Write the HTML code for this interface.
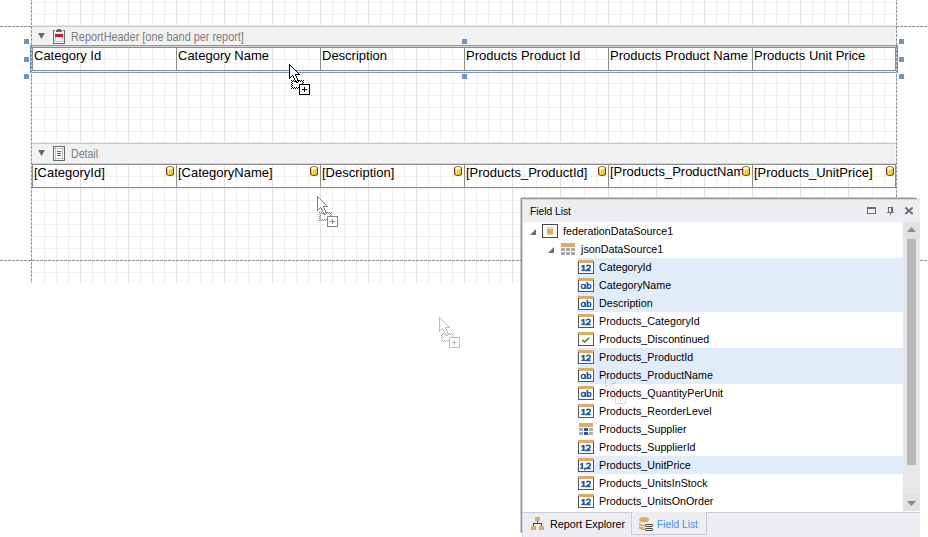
<!DOCTYPE html>
<html><head><meta charset="utf-8"><style>
html,body{margin:0;padding:0;width:928px;height:537px;overflow:hidden;background:#fff;position:relative}
.t{position:absolute;white-space:pre;font-family:"Liberation Sans",sans-serif}
</style></head><body>
<svg width="928" height="537" viewBox="0 0 928 537" style="position:absolute;left:0;top:0" shape-rendering="crispEdges"><rect x="44" y="0" width="1" height="283" fill="#efefef" /><rect x="56" y="0" width="1" height="283" fill="#efefef" /><rect x="68" y="0" width="1" height="283" fill="#efefef" /><rect x="80" y="0" width="1" height="283" fill="#e1e1e1" /><rect x="92" y="0" width="1" height="283" fill="#efefef" /><rect x="104" y="0" width="1" height="283" fill="#efefef" /><rect x="116" y="0" width="1" height="283" fill="#efefef" /><rect x="128" y="0" width="1" height="283" fill="#e1e1e1" /><rect x="140" y="0" width="1" height="283" fill="#efefef" /><rect x="152" y="0" width="1" height="283" fill="#efefef" /><rect x="164" y="0" width="1" height="283" fill="#efefef" /><rect x="176" y="0" width="1" height="283" fill="#e1e1e1" /><rect x="188" y="0" width="1" height="283" fill="#efefef" /><rect x="200" y="0" width="1" height="283" fill="#efefef" /><rect x="212" y="0" width="1" height="283" fill="#efefef" /><rect x="224" y="0" width="1" height="283" fill="#e1e1e1" /><rect x="236" y="0" width="1" height="283" fill="#efefef" /><rect x="248" y="0" width="1" height="283" fill="#efefef" /><rect x="260" y="0" width="1" height="283" fill="#efefef" /><rect x="272" y="0" width="1" height="283" fill="#e1e1e1" /><rect x="284" y="0" width="1" height="283" fill="#efefef" /><rect x="296" y="0" width="1" height="283" fill="#efefef" /><rect x="308" y="0" width="1" height="283" fill="#efefef" /><rect x="320" y="0" width="1" height="283" fill="#e1e1e1" /><rect x="332" y="0" width="1" height="283" fill="#efefef" /><rect x="344" y="0" width="1" height="283" fill="#efefef" /><rect x="356" y="0" width="1" height="283" fill="#efefef" /><rect x="368" y="0" width="1" height="283" fill="#e1e1e1" /><rect x="380" y="0" width="1" height="283" fill="#efefef" /><rect x="392" y="0" width="1" height="283" fill="#efefef" /><rect x="404" y="0" width="1" height="283" fill="#efefef" /><rect x="416" y="0" width="1" height="283" fill="#e1e1e1" /><rect x="428" y="0" width="1" height="283" fill="#efefef" /><rect x="440" y="0" width="1" height="283" fill="#efefef" /><rect x="452" y="0" width="1" height="283" fill="#efefef" /><rect x="464" y="0" width="1" height="283" fill="#e1e1e1" /><rect x="476" y="0" width="1" height="283" fill="#efefef" /><rect x="488" y="0" width="1" height="283" fill="#efefef" /><rect x="500" y="0" width="1" height="283" fill="#efefef" /><rect x="512" y="0" width="1" height="283" fill="#e1e1e1" /><rect x="524" y="0" width="1" height="283" fill="#efefef" /><rect x="536" y="0" width="1" height="283" fill="#efefef" /><rect x="548" y="0" width="1" height="283" fill="#efefef" /><rect x="560" y="0" width="1" height="283" fill="#e1e1e1" /><rect x="572" y="0" width="1" height="283" fill="#efefef" /><rect x="584" y="0" width="1" height="283" fill="#efefef" /><rect x="596" y="0" width="1" height="283" fill="#efefef" /><rect x="608" y="0" width="1" height="283" fill="#e1e1e1" /><rect x="620" y="0" width="1" height="283" fill="#efefef" /><rect x="632" y="0" width="1" height="283" fill="#efefef" /><rect x="644" y="0" width="1" height="283" fill="#efefef" /><rect x="656" y="0" width="1" height="283" fill="#e1e1e1" /><rect x="668" y="0" width="1" height="283" fill="#efefef" /><rect x="680" y="0" width="1" height="283" fill="#efefef" /><rect x="692" y="0" width="1" height="283" fill="#efefef" /><rect x="704" y="0" width="1" height="283" fill="#e1e1e1" /><rect x="716" y="0" width="1" height="283" fill="#efefef" /><rect x="728" y="0" width="1" height="283" fill="#efefef" /><rect x="740" y="0" width="1" height="283" fill="#efefef" /><rect x="752" y="0" width="1" height="283" fill="#e1e1e1" /><rect x="764" y="0" width="1" height="283" fill="#efefef" /><rect x="776" y="0" width="1" height="283" fill="#efefef" /><rect x="788" y="0" width="1" height="283" fill="#efefef" /><rect x="800" y="0" width="1" height="283" fill="#e1e1e1" /><rect x="812" y="0" width="1" height="283" fill="#efefef" /><rect x="824" y="0" width="1" height="283" fill="#efefef" /><rect x="836" y="0" width="1" height="283" fill="#efefef" /><rect x="848" y="0" width="1" height="283" fill="#e1e1e1" /><rect x="860" y="0" width="1" height="283" fill="#efefef" /><rect x="872" y="0" width="1" height="283" fill="#efefef" /><rect x="884" y="0" width="1" height="283" fill="#efefef" /><rect x="32" y="2" width="864" height="1" fill="#efefef" /><rect x="32" y="14" width="864" height="1" fill="#efefef" /><rect x="32" y="59" width="864" height="1" fill="#efefef" /><rect x="32" y="71" width="864" height="1" fill="#efefef" /><rect x="32" y="83" width="864" height="1" fill="#efefef" /><rect x="32" y="95" width="864" height="1" fill="#efefef" /><rect x="32" y="107" width="864" height="1" fill="#efefef" /><rect x="32" y="119" width="864" height="1" fill="#efefef" /><rect x="32" y="131" width="864" height="1" fill="#efefef" /><rect x="32" y="176" width="864" height="1" fill="#efefef" /><rect x="32" y="188" width="864" height="1" fill="#efefef" /><rect x="32" y="200" width="864" height="1" fill="#efefef" /><rect x="32" y="212" width="864" height="1" fill="#efefef" /><rect x="32" y="224" width="864" height="1" fill="#efefef" /><rect x="32" y="236" width="864" height="1" fill="#efefef" /><rect x="32" y="248" width="864" height="1" fill="#efefef" /><rect x="32" y="272" width="864" height="1" fill="#efefef" /><rect x="80" y="2" width="1" height="1" fill="#e1e1e1" /><rect x="80" y="14" width="1" height="1" fill="#e1e1e1" /><rect x="80" y="59" width="1" height="1" fill="#e1e1e1" /><rect x="80" y="71" width="1" height="1" fill="#e1e1e1" /><rect x="80" y="83" width="1" height="1" fill="#e1e1e1" /><rect x="80" y="95" width="1" height="1" fill="#e1e1e1" /><rect x="80" y="107" width="1" height="1" fill="#e1e1e1" /><rect x="80" y="119" width="1" height="1" fill="#e1e1e1" /><rect x="80" y="131" width="1" height="1" fill="#e1e1e1" /><rect x="80" y="176" width="1" height="1" fill="#e1e1e1" /><rect x="80" y="188" width="1" height="1" fill="#e1e1e1" /><rect x="80" y="200" width="1" height="1" fill="#e1e1e1" /><rect x="80" y="212" width="1" height="1" fill="#e1e1e1" /><rect x="80" y="224" width="1" height="1" fill="#e1e1e1" /><rect x="80" y="236" width="1" height="1" fill="#e1e1e1" /><rect x="80" y="248" width="1" height="1" fill="#e1e1e1" /><rect x="80" y="272" width="1" height="1" fill="#e1e1e1" /><rect x="128" y="2" width="1" height="1" fill="#e1e1e1" /><rect x="128" y="14" width="1" height="1" fill="#e1e1e1" /><rect x="128" y="59" width="1" height="1" fill="#e1e1e1" /><rect x="128" y="71" width="1" height="1" fill="#e1e1e1" /><rect x="128" y="83" width="1" height="1" fill="#e1e1e1" /><rect x="128" y="95" width="1" height="1" fill="#e1e1e1" /><rect x="128" y="107" width="1" height="1" fill="#e1e1e1" /><rect x="128" y="119" width="1" height="1" fill="#e1e1e1" /><rect x="128" y="131" width="1" height="1" fill="#e1e1e1" /><rect x="128" y="176" width="1" height="1" fill="#e1e1e1" /><rect x="128" y="188" width="1" height="1" fill="#e1e1e1" /><rect x="128" y="200" width="1" height="1" fill="#e1e1e1" /><rect x="128" y="212" width="1" height="1" fill="#e1e1e1" /><rect x="128" y="224" width="1" height="1" fill="#e1e1e1" /><rect x="128" y="236" width="1" height="1" fill="#e1e1e1" /><rect x="128" y="248" width="1" height="1" fill="#e1e1e1" /><rect x="128" y="272" width="1" height="1" fill="#e1e1e1" /><rect x="176" y="2" width="1" height="1" fill="#e1e1e1" /><rect x="176" y="14" width="1" height="1" fill="#e1e1e1" /><rect x="176" y="59" width="1" height="1" fill="#e1e1e1" /><rect x="176" y="71" width="1" height="1" fill="#e1e1e1" /><rect x="176" y="83" width="1" height="1" fill="#e1e1e1" /><rect x="176" y="95" width="1" height="1" fill="#e1e1e1" /><rect x="176" y="107" width="1" height="1" fill="#e1e1e1" /><rect x="176" y="119" width="1" height="1" fill="#e1e1e1" /><rect x="176" y="131" width="1" height="1" fill="#e1e1e1" /><rect x="176" y="176" width="1" height="1" fill="#e1e1e1" /><rect x="176" y="188" width="1" height="1" fill="#e1e1e1" /><rect x="176" y="200" width="1" height="1" fill="#e1e1e1" /><rect x="176" y="212" width="1" height="1" fill="#e1e1e1" /><rect x="176" y="224" width="1" height="1" fill="#e1e1e1" /><rect x="176" y="236" width="1" height="1" fill="#e1e1e1" /><rect x="176" y="248" width="1" height="1" fill="#e1e1e1" /><rect x="176" y="272" width="1" height="1" fill="#e1e1e1" /><rect x="224" y="2" width="1" height="1" fill="#e1e1e1" /><rect x="224" y="14" width="1" height="1" fill="#e1e1e1" /><rect x="224" y="59" width="1" height="1" fill="#e1e1e1" /><rect x="224" y="71" width="1" height="1" fill="#e1e1e1" /><rect x="224" y="83" width="1" height="1" fill="#e1e1e1" /><rect x="224" y="95" width="1" height="1" fill="#e1e1e1" /><rect x="224" y="107" width="1" height="1" fill="#e1e1e1" /><rect x="224" y="119" width="1" height="1" fill="#e1e1e1" /><rect x="224" y="131" width="1" height="1" fill="#e1e1e1" /><rect x="224" y="176" width="1" height="1" fill="#e1e1e1" /><rect x="224" y="188" width="1" height="1" fill="#e1e1e1" /><rect x="224" y="200" width="1" height="1" fill="#e1e1e1" /><rect x="224" y="212" width="1" height="1" fill="#e1e1e1" /><rect x="224" y="224" width="1" height="1" fill="#e1e1e1" /><rect x="224" y="236" width="1" height="1" fill="#e1e1e1" /><rect x="224" y="248" width="1" height="1" fill="#e1e1e1" /><rect x="224" y="272" width="1" height="1" fill="#e1e1e1" /><rect x="272" y="2" width="1" height="1" fill="#e1e1e1" /><rect x="272" y="14" width="1" height="1" fill="#e1e1e1" /><rect x="272" y="59" width="1" height="1" fill="#e1e1e1" /><rect x="272" y="71" width="1" height="1" fill="#e1e1e1" /><rect x="272" y="83" width="1" height="1" fill="#e1e1e1" /><rect x="272" y="95" width="1" height="1" fill="#e1e1e1" /><rect x="272" y="107" width="1" height="1" fill="#e1e1e1" /><rect x="272" y="119" width="1" height="1" fill="#e1e1e1" /><rect x="272" y="131" width="1" height="1" fill="#e1e1e1" /><rect x="272" y="176" width="1" height="1" fill="#e1e1e1" /><rect x="272" y="188" width="1" height="1" fill="#e1e1e1" /><rect x="272" y="200" width="1" height="1" fill="#e1e1e1" /><rect x="272" y="212" width="1" height="1" fill="#e1e1e1" /><rect x="272" y="224" width="1" height="1" fill="#e1e1e1" /><rect x="272" y="236" width="1" height="1" fill="#e1e1e1" /><rect x="272" y="248" width="1" height="1" fill="#e1e1e1" /><rect x="272" y="272" width="1" height="1" fill="#e1e1e1" /><rect x="320" y="2" width="1" height="1" fill="#e1e1e1" /><rect x="320" y="14" width="1" height="1" fill="#e1e1e1" /><rect x="320" y="59" width="1" height="1" fill="#e1e1e1" /><rect x="320" y="71" width="1" height="1" fill="#e1e1e1" /><rect x="320" y="83" width="1" height="1" fill="#e1e1e1" /><rect x="320" y="95" width="1" height="1" fill="#e1e1e1" /><rect x="320" y="107" width="1" height="1" fill="#e1e1e1" /><rect x="320" y="119" width="1" height="1" fill="#e1e1e1" /><rect x="320" y="131" width="1" height="1" fill="#e1e1e1" /><rect x="320" y="176" width="1" height="1" fill="#e1e1e1" /><rect x="320" y="188" width="1" height="1" fill="#e1e1e1" /><rect x="320" y="200" width="1" height="1" fill="#e1e1e1" /><rect x="320" y="212" width="1" height="1" fill="#e1e1e1" /><rect x="320" y="224" width="1" height="1" fill="#e1e1e1" /><rect x="320" y="236" width="1" height="1" fill="#e1e1e1" /><rect x="320" y="248" width="1" height="1" fill="#e1e1e1" /><rect x="320" y="272" width="1" height="1" fill="#e1e1e1" /><rect x="368" y="2" width="1" height="1" fill="#e1e1e1" /><rect x="368" y="14" width="1" height="1" fill="#e1e1e1" /><rect x="368" y="59" width="1" height="1" fill="#e1e1e1" /><rect x="368" y="71" width="1" height="1" fill="#e1e1e1" /><rect x="368" y="83" width="1" height="1" fill="#e1e1e1" /><rect x="368" y="95" width="1" height="1" fill="#e1e1e1" /><rect x="368" y="107" width="1" height="1" fill="#e1e1e1" /><rect x="368" y="119" width="1" height="1" fill="#e1e1e1" /><rect x="368" y="131" width="1" height="1" fill="#e1e1e1" /><rect x="368" y="176" width="1" height="1" fill="#e1e1e1" /><rect x="368" y="188" width="1" height="1" fill="#e1e1e1" /><rect x="368" y="200" width="1" height="1" fill="#e1e1e1" /><rect x="368" y="212" width="1" height="1" fill="#e1e1e1" /><rect x="368" y="224" width="1" height="1" fill="#e1e1e1" /><rect x="368" y="236" width="1" height="1" fill="#e1e1e1" /><rect x="368" y="248" width="1" height="1" fill="#e1e1e1" /><rect x="368" y="272" width="1" height="1" fill="#e1e1e1" /><rect x="416" y="2" width="1" height="1" fill="#e1e1e1" /><rect x="416" y="14" width="1" height="1" fill="#e1e1e1" /><rect x="416" y="59" width="1" height="1" fill="#e1e1e1" /><rect x="416" y="71" width="1" height="1" fill="#e1e1e1" /><rect x="416" y="83" width="1" height="1" fill="#e1e1e1" /><rect x="416" y="95" width="1" height="1" fill="#e1e1e1" /><rect x="416" y="107" width="1" height="1" fill="#e1e1e1" /><rect x="416" y="119" width="1" height="1" fill="#e1e1e1" /><rect x="416" y="131" width="1" height="1" fill="#e1e1e1" /><rect x="416" y="176" width="1" height="1" fill="#e1e1e1" /><rect x="416" y="188" width="1" height="1" fill="#e1e1e1" /><rect x="416" y="200" width="1" height="1" fill="#e1e1e1" /><rect x="416" y="212" width="1" height="1" fill="#e1e1e1" /><rect x="416" y="224" width="1" height="1" fill="#e1e1e1" /><rect x="416" y="236" width="1" height="1" fill="#e1e1e1" /><rect x="416" y="248" width="1" height="1" fill="#e1e1e1" /><rect x="416" y="272" width="1" height="1" fill="#e1e1e1" /><rect x="464" y="2" width="1" height="1" fill="#e1e1e1" /><rect x="464" y="14" width="1" height="1" fill="#e1e1e1" /><rect x="464" y="59" width="1" height="1" fill="#e1e1e1" /><rect x="464" y="71" width="1" height="1" fill="#e1e1e1" /><rect x="464" y="83" width="1" height="1" fill="#e1e1e1" /><rect x="464" y="95" width="1" height="1" fill="#e1e1e1" /><rect x="464" y="107" width="1" height="1" fill="#e1e1e1" /><rect x="464" y="119" width="1" height="1" fill="#e1e1e1" /><rect x="464" y="131" width="1" height="1" fill="#e1e1e1" /><rect x="464" y="176" width="1" height="1" fill="#e1e1e1" /><rect x="464" y="188" width="1" height="1" fill="#e1e1e1" /><rect x="464" y="200" width="1" height="1" fill="#e1e1e1" /><rect x="464" y="212" width="1" height="1" fill="#e1e1e1" /><rect x="464" y="224" width="1" height="1" fill="#e1e1e1" /><rect x="464" y="236" width="1" height="1" fill="#e1e1e1" /><rect x="464" y="248" width="1" height="1" fill="#e1e1e1" /><rect x="464" y="272" width="1" height="1" fill="#e1e1e1" /><rect x="512" y="2" width="1" height="1" fill="#e1e1e1" /><rect x="512" y="14" width="1" height="1" fill="#e1e1e1" /><rect x="512" y="59" width="1" height="1" fill="#e1e1e1" /><rect x="512" y="71" width="1" height="1" fill="#e1e1e1" /><rect x="512" y="83" width="1" height="1" fill="#e1e1e1" /><rect x="512" y="95" width="1" height="1" fill="#e1e1e1" /><rect x="512" y="107" width="1" height="1" fill="#e1e1e1" /><rect x="512" y="119" width="1" height="1" fill="#e1e1e1" /><rect x="512" y="131" width="1" height="1" fill="#e1e1e1" /><rect x="512" y="176" width="1" height="1" fill="#e1e1e1" /><rect x="512" y="188" width="1" height="1" fill="#e1e1e1" /><rect x="512" y="200" width="1" height="1" fill="#e1e1e1" /><rect x="512" y="212" width="1" height="1" fill="#e1e1e1" /><rect x="512" y="224" width="1" height="1" fill="#e1e1e1" /><rect x="512" y="236" width="1" height="1" fill="#e1e1e1" /><rect x="512" y="248" width="1" height="1" fill="#e1e1e1" /><rect x="512" y="272" width="1" height="1" fill="#e1e1e1" /><rect x="560" y="2" width="1" height="1" fill="#e1e1e1" /><rect x="560" y="14" width="1" height="1" fill="#e1e1e1" /><rect x="560" y="59" width="1" height="1" fill="#e1e1e1" /><rect x="560" y="71" width="1" height="1" fill="#e1e1e1" /><rect x="560" y="83" width="1" height="1" fill="#e1e1e1" /><rect x="560" y="95" width="1" height="1" fill="#e1e1e1" /><rect x="560" y="107" width="1" height="1" fill="#e1e1e1" /><rect x="560" y="119" width="1" height="1" fill="#e1e1e1" /><rect x="560" y="131" width="1" height="1" fill="#e1e1e1" /><rect x="560" y="176" width="1" height="1" fill="#e1e1e1" /><rect x="560" y="188" width="1" height="1" fill="#e1e1e1" /><rect x="560" y="200" width="1" height="1" fill="#e1e1e1" /><rect x="560" y="212" width="1" height="1" fill="#e1e1e1" /><rect x="560" y="224" width="1" height="1" fill="#e1e1e1" /><rect x="560" y="236" width="1" height="1" fill="#e1e1e1" /><rect x="560" y="248" width="1" height="1" fill="#e1e1e1" /><rect x="560" y="272" width="1" height="1" fill="#e1e1e1" /><rect x="608" y="2" width="1" height="1" fill="#e1e1e1" /><rect x="608" y="14" width="1" height="1" fill="#e1e1e1" /><rect x="608" y="59" width="1" height="1" fill="#e1e1e1" /><rect x="608" y="71" width="1" height="1" fill="#e1e1e1" /><rect x="608" y="83" width="1" height="1" fill="#e1e1e1" /><rect x="608" y="95" width="1" height="1" fill="#e1e1e1" /><rect x="608" y="107" width="1" height="1" fill="#e1e1e1" /><rect x="608" y="119" width="1" height="1" fill="#e1e1e1" /><rect x="608" y="131" width="1" height="1" fill="#e1e1e1" /><rect x="608" y="176" width="1" height="1" fill="#e1e1e1" /><rect x="608" y="188" width="1" height="1" fill="#e1e1e1" /><rect x="608" y="200" width="1" height="1" fill="#e1e1e1" /><rect x="608" y="212" width="1" height="1" fill="#e1e1e1" /><rect x="608" y="224" width="1" height="1" fill="#e1e1e1" /><rect x="608" y="236" width="1" height="1" fill="#e1e1e1" /><rect x="608" y="248" width="1" height="1" fill="#e1e1e1" /><rect x="608" y="272" width="1" height="1" fill="#e1e1e1" /><rect x="656" y="2" width="1" height="1" fill="#e1e1e1" /><rect x="656" y="14" width="1" height="1" fill="#e1e1e1" /><rect x="656" y="59" width="1" height="1" fill="#e1e1e1" /><rect x="656" y="71" width="1" height="1" fill="#e1e1e1" /><rect x="656" y="83" width="1" height="1" fill="#e1e1e1" /><rect x="656" y="95" width="1" height="1" fill="#e1e1e1" /><rect x="656" y="107" width="1" height="1" fill="#e1e1e1" /><rect x="656" y="119" width="1" height="1" fill="#e1e1e1" /><rect x="656" y="131" width="1" height="1" fill="#e1e1e1" /><rect x="656" y="176" width="1" height="1" fill="#e1e1e1" /><rect x="656" y="188" width="1" height="1" fill="#e1e1e1" /><rect x="656" y="200" width="1" height="1" fill="#e1e1e1" /><rect x="656" y="212" width="1" height="1" fill="#e1e1e1" /><rect x="656" y="224" width="1" height="1" fill="#e1e1e1" /><rect x="656" y="236" width="1" height="1" fill="#e1e1e1" /><rect x="656" y="248" width="1" height="1" fill="#e1e1e1" /><rect x="656" y="272" width="1" height="1" fill="#e1e1e1" /><rect x="704" y="2" width="1" height="1" fill="#e1e1e1" /><rect x="704" y="14" width="1" height="1" fill="#e1e1e1" /><rect x="704" y="59" width="1" height="1" fill="#e1e1e1" /><rect x="704" y="71" width="1" height="1" fill="#e1e1e1" /><rect x="704" y="83" width="1" height="1" fill="#e1e1e1" /><rect x="704" y="95" width="1" height="1" fill="#e1e1e1" /><rect x="704" y="107" width="1" height="1" fill="#e1e1e1" /><rect x="704" y="119" width="1" height="1" fill="#e1e1e1" /><rect x="704" y="131" width="1" height="1" fill="#e1e1e1" /><rect x="704" y="176" width="1" height="1" fill="#e1e1e1" /><rect x="704" y="188" width="1" height="1" fill="#e1e1e1" /><rect x="704" y="200" width="1" height="1" fill="#e1e1e1" /><rect x="704" y="212" width="1" height="1" fill="#e1e1e1" /><rect x="704" y="224" width="1" height="1" fill="#e1e1e1" /><rect x="704" y="236" width="1" height="1" fill="#e1e1e1" /><rect x="704" y="248" width="1" height="1" fill="#e1e1e1" /><rect x="704" y="272" width="1" height="1" fill="#e1e1e1" /><rect x="752" y="2" width="1" height="1" fill="#e1e1e1" /><rect x="752" y="14" width="1" height="1" fill="#e1e1e1" /><rect x="752" y="59" width="1" height="1" fill="#e1e1e1" /><rect x="752" y="71" width="1" height="1" fill="#e1e1e1" /><rect x="752" y="83" width="1" height="1" fill="#e1e1e1" /><rect x="752" y="95" width="1" height="1" fill="#e1e1e1" /><rect x="752" y="107" width="1" height="1" fill="#e1e1e1" /><rect x="752" y="119" width="1" height="1" fill="#e1e1e1" /><rect x="752" y="131" width="1" height="1" fill="#e1e1e1" /><rect x="752" y="176" width="1" height="1" fill="#e1e1e1" /><rect x="752" y="188" width="1" height="1" fill="#e1e1e1" /><rect x="752" y="200" width="1" height="1" fill="#e1e1e1" /><rect x="752" y="212" width="1" height="1" fill="#e1e1e1" /><rect x="752" y="224" width="1" height="1" fill="#e1e1e1" /><rect x="752" y="236" width="1" height="1" fill="#e1e1e1" /><rect x="752" y="248" width="1" height="1" fill="#e1e1e1" /><rect x="752" y="272" width="1" height="1" fill="#e1e1e1" /><rect x="800" y="2" width="1" height="1" fill="#e1e1e1" /><rect x="800" y="14" width="1" height="1" fill="#e1e1e1" /><rect x="800" y="59" width="1" height="1" fill="#e1e1e1" /><rect x="800" y="71" width="1" height="1" fill="#e1e1e1" /><rect x="800" y="83" width="1" height="1" fill="#e1e1e1" /><rect x="800" y="95" width="1" height="1" fill="#e1e1e1" /><rect x="800" y="107" width="1" height="1" fill="#e1e1e1" /><rect x="800" y="119" width="1" height="1" fill="#e1e1e1" /><rect x="800" y="131" width="1" height="1" fill="#e1e1e1" /><rect x="800" y="176" width="1" height="1" fill="#e1e1e1" /><rect x="800" y="188" width="1" height="1" fill="#e1e1e1" /><rect x="800" y="200" width="1" height="1" fill="#e1e1e1" /><rect x="800" y="212" width="1" height="1" fill="#e1e1e1" /><rect x="800" y="224" width="1" height="1" fill="#e1e1e1" /><rect x="800" y="236" width="1" height="1" fill="#e1e1e1" /><rect x="800" y="248" width="1" height="1" fill="#e1e1e1" /><rect x="800" y="272" width="1" height="1" fill="#e1e1e1" /><rect x="848" y="2" width="1" height="1" fill="#e1e1e1" /><rect x="848" y="14" width="1" height="1" fill="#e1e1e1" /><rect x="848" y="59" width="1" height="1" fill="#e1e1e1" /><rect x="848" y="71" width="1" height="1" fill="#e1e1e1" /><rect x="848" y="83" width="1" height="1" fill="#e1e1e1" /><rect x="848" y="95" width="1" height="1" fill="#e1e1e1" /><rect x="848" y="107" width="1" height="1" fill="#e1e1e1" /><rect x="848" y="119" width="1" height="1" fill="#e1e1e1" /><rect x="848" y="131" width="1" height="1" fill="#e1e1e1" /><rect x="848" y="176" width="1" height="1" fill="#e1e1e1" /><rect x="848" y="188" width="1" height="1" fill="#e1e1e1" /><rect x="848" y="200" width="1" height="1" fill="#e1e1e1" /><rect x="848" y="212" width="1" height="1" fill="#e1e1e1" /><rect x="848" y="224" width="1" height="1" fill="#e1e1e1" /><rect x="848" y="236" width="1" height="1" fill="#e1e1e1" /><rect x="848" y="248" width="1" height="1" fill="#e1e1e1" /><rect x="848" y="272" width="1" height="1" fill="#e1e1e1" /><rect x="32" y="25" width="864" height="1" fill="#ebebeb" /><rect x="32" y="26" width="864" height="1" fill="#c9c9c9" /><rect x="32" y="27" width="863" height="20" fill="#f2f2f2" /><rect x="895" y="27" width="1" height="20" fill="#f9f9f9" /><rect x="32" y="46" width="864" height="1" fill="#d6d6d6" /><rect x="32" y="142" width="864" height="1" fill="#ebebeb" /><rect x="32" y="143" width="864" height="1" fill="#c9c9c9" /><rect x="32" y="144" width="863" height="20" fill="#f2f2f2" /><rect x="895" y="144" width="1" height="20" fill="#f9f9f9" /><rect x="32" y="163" width="864" height="1" fill="#d6d6d6" /><rect x="32" y="47" width="864" height="1" fill="#8c8c8c" /><rect x="32" y="70" width="864" height="1" fill="#8c8c8c" /><rect x="32" y="47" width="1" height="24" fill="#8c8c8c" /><rect x="176" y="47" width="1" height="24" fill="#8c8c8c" /><rect x="320" y="47" width="1" height="24" fill="#8c8c8c" /><rect x="464" y="47" width="1" height="24" fill="#8c8c8c" /><rect x="608" y="47" width="1" height="24" fill="#8c8c8c" /><rect x="752" y="47" width="1" height="24" fill="#8c8c8c" /><rect x="895" y="47" width="1" height="24" fill="#8c8c8c" /><rect x="32" y="164" width="864" height="1" fill="#8c8c8c" /><rect x="32" y="187" width="864" height="1" fill="#8c8c8c" /><rect x="32" y="164" width="1" height="24" fill="#8c8c8c" /><rect x="176" y="164" width="1" height="24" fill="#8c8c8c" /><rect x="320" y="164" width="1" height="24" fill="#8c8c8c" /><rect x="464" y="164" width="1" height="24" fill="#8c8c8c" /><rect x="608" y="164" width="1" height="24" fill="#8c8c8c" /><rect x="752" y="164" width="1" height="24" fill="#8c8c8c" /><rect x="895" y="164" width="1" height="24" fill="#8c8c8c" /><line x1="31.5" y1="0" x2="31.5" y2="283" stroke="#8e8e8e" stroke-width="1" stroke-dasharray="3 1" stroke-dashoffset="2"/><line x1="896.5" y1="0" x2="896.5" y2="283" stroke="#8e8e8e" stroke-width="1" stroke-dasharray="3 1" stroke-dashoffset="2"/><line x1="0" y1="26.5" x2="31" y2="26.5" stroke="#8e8e8e" stroke-width="1" stroke-dasharray="3 1"/><line x1="896" y1="26.5" x2="928" y2="26.5" stroke="#8e8e8e" stroke-width="1" stroke-dasharray="3 1"/><line x1="0" y1="260.5" x2="928" y2="260.5" stroke="#8e8e8e" stroke-width="1" stroke-dasharray="3 1"/><rect x="30.5" y="45.5" width="867" height="27" fill="none" stroke="#7898c8" stroke-width="1"/><rect x="24" y="39" width="5" height="5" fill="#7393c6" /><rect x="462" y="39" width="5" height="5" fill="#7393c6" /><rect x="899" y="39" width="5" height="5" fill="#7393c6" /><rect x="24" y="57" width="5" height="5" fill="#7393c6" /><rect x="899" y="57" width="5" height="5" fill="#7393c6" /><rect x="24" y="74" width="5" height="5" fill="#7393c6" /><rect x="462" y="74" width="5" height="5" fill="#7393c6" /><rect x="899" y="74" width="5" height="5" fill="#7393c6" /><polygon points="38,33 45,33 41.5,39" fill="#6b6b6b" shape-rendering="geometricPrecision"/><polygon points="38,150 45,150 41.5,156" fill="#6b6b6b" shape-rendering="geometricPrecision"/><g>
<rect x="53" y="30" width="2" height="1" fill="#6a6a6a"/>
<rect x="63" y="30" width="2" height="1" fill="#6a6a6a"/>
<rect x="53" y="30" width="1" height="14" fill="#6a6a6a"/>
<rect x="64" y="30" width="1" height="14" fill="#6a6a6a"/>
<rect x="53" y="43" width="12" height="1" fill="#6a6a6a"/>
<rect x="57" y="29" width="4" height="1" fill="#6a6a6a"/>
<rect x="56" y="30" width="6" height="2" fill="#6a6a6a"/>
<rect x="55" y="33" width="1" height="10" fill="#c4c4c4"/>
<rect x="62" y="33" width="1" height="10" fill="#c4c4c4"/>
<rect x="55" y="41" width="8" height="1" fill="#c4c4c4"/>
<rect x="54" y="42" width="10" height="1" fill="#fafafa"/>
<rect x="56" y="37" width="6" height="4" fill="#f4f4f4"/>
<rect x="55" y="34" width="8" height="3" fill="#d8141c"/>
</g><g>
<rect x="53" y="146" width="12" height="15" fill="#6a6a6a"/>
<rect x="54" y="147" width="10" height="13" fill="#fdfdfd"/>
<rect x="55" y="147" width="1" height="13" fill="#c2c2c2"/>
<rect x="62" y="147" width="1" height="13" fill="#c2c2c2"/>
<rect x="54" y="148" width="10" height="1" fill="#c2c2c2"/>
<rect x="54" y="158" width="10" height="1" fill="#c2c2c2"/>
<rect x="57" y="151" width="4" height="1" fill="#2a6fc4"/>
<rect x="57" y="153" width="4" height="1" fill="#2a6fc4"/>
<rect x="57" y="155" width="4" height="1" fill="#2a6fc4"/>
</g><g transform="translate(166,166)" shape-rendering="geometricPrecision">
<path d="M0.6 2.2 C0.6 0.4 7.4 0.4 7.4 2.2 V8 C7.4 9.8 0.6 9.8 0.6 8 Z" fill="#f0b820" stroke="#6e4210" stroke-width="1.1"/>
<path d="M1.4 3.2 H6.6 V8 C6.6 9 1.4 9 1.4 8 Z" fill="#f6c93a"/>
<ellipse cx="4" cy="2.4" rx="2.9" ry="1.3" fill="#fffdf2"/>
<rect x="2" y="4" width="1.2" height="4.5" fill="#fde488"/>
</g><g transform="translate(310,166)" shape-rendering="geometricPrecision">
<path d="M0.6 2.2 C0.6 0.4 7.4 0.4 7.4 2.2 V8 C7.4 9.8 0.6 9.8 0.6 8 Z" fill="#f0b820" stroke="#6e4210" stroke-width="1.1"/>
<path d="M1.4 3.2 H6.6 V8 C6.6 9 1.4 9 1.4 8 Z" fill="#f6c93a"/>
<ellipse cx="4" cy="2.4" rx="2.9" ry="1.3" fill="#fffdf2"/>
<rect x="2" y="4" width="1.2" height="4.5" fill="#fde488"/>
</g><g transform="translate(454,166)" shape-rendering="geometricPrecision">
<path d="M0.6 2.2 C0.6 0.4 7.4 0.4 7.4 2.2 V8 C7.4 9.8 0.6 9.8 0.6 8 Z" fill="#f0b820" stroke="#6e4210" stroke-width="1.1"/>
<path d="M1.4 3.2 H6.6 V8 C6.6 9 1.4 9 1.4 8 Z" fill="#f6c93a"/>
<ellipse cx="4" cy="2.4" rx="2.9" ry="1.3" fill="#fffdf2"/>
<rect x="2" y="4" width="1.2" height="4.5" fill="#fde488"/>
</g><g transform="translate(598,166)" shape-rendering="geometricPrecision">
<path d="M0.6 2.2 C0.6 0.4 7.4 0.4 7.4 2.2 V8 C7.4 9.8 0.6 9.8 0.6 8 Z" fill="#f0b820" stroke="#6e4210" stroke-width="1.1"/>
<path d="M1.4 3.2 H6.6 V8 C6.6 9 1.4 9 1.4 8 Z" fill="#f6c93a"/>
<ellipse cx="4" cy="2.4" rx="2.9" ry="1.3" fill="#fffdf2"/>
<rect x="2" y="4" width="1.2" height="4.5" fill="#fde488"/>
</g><g transform="translate(742,166)" shape-rendering="geometricPrecision">
<path d="M0.6 2.2 C0.6 0.4 7.4 0.4 7.4 2.2 V8 C7.4 9.8 0.6 9.8 0.6 8 Z" fill="#f0b820" stroke="#6e4210" stroke-width="1.1"/>
<path d="M1.4 3.2 H6.6 V8 C6.6 9 1.4 9 1.4 8 Z" fill="#f6c93a"/>
<ellipse cx="4" cy="2.4" rx="2.9" ry="1.3" fill="#fffdf2"/>
<rect x="2" y="4" width="1.2" height="4.5" fill="#fde488"/>
</g><g transform="translate(886,166)" shape-rendering="geometricPrecision">
<path d="M0.6 2.2 C0.6 0.4 7.4 0.4 7.4 2.2 V8 C7.4 9.8 0.6 9.8 0.6 8 Z" fill="#f0b820" stroke="#6e4210" stroke-width="1.1"/>
<path d="M1.4 3.2 H6.6 V8 C6.6 9 1.4 9 1.4 8 Z" fill="#f6c93a"/>
<ellipse cx="4" cy="2.4" rx="2.9" ry="1.3" fill="#fffdf2"/>
<rect x="2" y="4" width="1.2" height="4.5" fill="#fde488"/>
</g></svg>
<div class="t" style="left:34px;top:46.0px;font-size:13px;line-height:19px;color:#000;">Category Id</div><div class="t" style="left:178px;top:46.0px;font-size:13px;line-height:19px;color:#000;">Category Name</div><div class="t" style="left:322px;top:46.0px;font-size:13px;line-height:19px;color:#000;">Description</div><div class="t" style="left:466px;top:46.0px;font-size:13px;line-height:19px;color:#000;">Products Product Id</div><div class="t" style="left:610px;top:46.0px;font-size:13px;line-height:19px;color:#000;">Products Product Name</div><div class="t" style="left:754px;top:46.0px;font-size:13px;line-height:19px;color:#000;">Products Unit Price</div><div class="t" style="left:34px;top:163.0px;font-size:13px;line-height:19px;color:#000;width:132px;overflow:hidden;">[CategoryId]</div><div class="t" style="left:178px;top:163.0px;font-size:13px;line-height:19px;color:#000;width:132px;overflow:hidden;">[CategoryName]</div><div class="t" style="left:322px;top:163.0px;font-size:13px;line-height:19px;color:#000;width:132px;overflow:hidden;">[Description]</div><div class="t" style="left:466px;top:163.0px;font-size:13px;line-height:19px;color:#000;width:132px;overflow:hidden;">[Products_ProductId]</div><div class="t" style="left:610px;top:162.0px;font-size:13px;line-height:19px;color:#000;width:132px;overflow:hidden;">[Products_ProductName]</div><div class="t" style="left:754px;top:163.0px;font-size:13px;line-height:19px;color:#000;width:132px;overflow:hidden;">[Products_UnitPrice]</div><div class="t" style="left:71px;top:27.84px;font-size:12px;line-height:18px;color:#7a7a7a;transform:scaleX(0.906);transform-origin:0 0;">ReportHeader [one band per report]</div><div class="t" style="left:71px;top:144.84px;font-size:12px;line-height:18px;color:#7a7a7a;transform:scaleX(0.88);transform-origin:0 0;">Detail</div>
<svg style="position:absolute;left:289px;top:64px;opacity:1" width="22" height="32" shape-rendering="crispEdges"><polygon points="0.5,0.5 10,10 6,10.5 9,17.5 7,18 4,12 0.5,14" fill="#fff"/><rect x="0" y="0" width="1" height="1" fill="#000"/><rect x="0" y="1" width="1" height="1" fill="#000"/><rect x="0" y="2" width="1" height="1" fill="#000"/><rect x="0" y="3" width="1" height="1" fill="#000"/><rect x="0" y="4" width="1" height="1" fill="#000"/><rect x="0" y="5" width="1" height="1" fill="#000"/><rect x="0" y="6" width="1" height="1" fill="#000"/><rect x="0" y="7" width="1" height="1" fill="#000"/><rect x="0" y="8" width="1" height="1" fill="#000"/><rect x="0" y="9" width="1" height="1" fill="#000"/><rect x="0" y="10" width="1" height="1" fill="#000"/><rect x="0" y="11" width="1" height="1" fill="#000"/><rect x="0" y="12" width="1" height="1" fill="#000"/><rect x="0" y="13" width="1" height="1" fill="#000"/><rect x="0" y="14" width="1" height="1" fill="#000"/><rect x="1" y="1" width="1" height="1" fill="#000"/><rect x="1" y="13" width="1" height="1" fill="#000"/><rect x="2" y="2" width="1" height="1" fill="#000"/><rect x="2" y="12" width="1" height="1" fill="#000"/><rect x="2" y="16" width="1" height="1" fill="#000"/><rect x="2" y="18" width="1" height="1" fill="#000"/><rect x="2" y="20" width="1" height="1" fill="#000"/><rect x="2" y="22" width="1" height="1" fill="#000"/><rect x="2" y="24" width="1" height="1" fill="#000"/><rect x="3" y="3" width="1" height="1" fill="#000"/><rect x="3" y="11" width="1" height="1" fill="#000"/><rect x="3" y="17" width="1" height="1" fill="#000"/><rect x="3" y="19" width="1" height="1" fill="#000"/><rect x="3" y="21" width="1" height="1" fill="#000"/><rect x="3" y="23" width="1" height="1" fill="#000"/><rect x="4" y="4" width="1" height="1" fill="#000"/><rect x="4" y="12" width="1" height="1" fill="#000"/><rect x="4" y="13" width="1" height="1" fill="#000"/><rect x="4" y="16" width="1" height="1" fill="#000"/><rect x="4" y="24" width="1" height="1" fill="#000"/><rect x="5" y="5" width="1" height="1" fill="#000"/><rect x="5" y="14" width="1" height="1" fill="#000"/><rect x="5" y="15" width="1" height="1" fill="#000"/><rect x="5" y="17" width="1" height="1" fill="#000"/><rect x="5" y="23" width="1" height="1" fill="#000"/><rect x="6" y="6" width="1" height="1" fill="#000"/><rect x="6" y="10" width="1" height="1" fill="#000"/><rect x="6" y="11" width="1" height="1" fill="#000"/><rect x="6" y="16" width="1" height="1" fill="#000"/><rect x="6" y="17" width="1" height="1" fill="#000"/><rect x="6" y="24" width="1" height="1" fill="#000"/><rect x="7" y="7" width="1" height="1" fill="#000"/><rect x="7" y="10" width="1" height="1" fill="#000"/><rect x="7" y="12" width="1" height="1" fill="#000"/><rect x="7" y="13" width="1" height="1" fill="#000"/><rect x="7" y="17" width="1" height="1" fill="#000"/><rect x="7" y="18" width="1" height="1" fill="#000"/><rect x="7" y="23" width="1" height="1" fill="#000"/><rect x="8" y="8" width="1" height="1" fill="#000"/><rect x="8" y="10" width="1" height="1" fill="#000"/><rect x="8" y="14" width="1" height="1" fill="#000"/><rect x="8" y="15" width="1" height="1" fill="#000"/><rect x="8" y="16" width="1" height="1" fill="#000"/><rect x="8" y="18" width="1" height="1" fill="#000"/><rect x="8" y="24" width="1" height="1" fill="#000"/><rect x="9" y="9" width="1" height="1" fill="#000"/><rect x="9" y="10" width="1" height="1" fill="#000"/><rect x="9" y="16" width="1" height="1" fill="#000"/><rect x="9" y="17" width="1" height="1" fill="#000"/><rect x="9" y="23" width="1" height="1" fill="#000"/><rect x="10" y="10" width="1" height="1" fill="#000"/><rect x="10" y="16" width="1" height="1" fill="#000"/><rect x="11" y="17" width="1" height="1" fill="#000"/><rect x="12" y="16" width="1" height="1" fill="#000"/><rect x="13" y="17" width="1" height="1" fill="#000"/><rect x="13" y="19" width="1" height="1" fill="#000"/><rect x="14" y="16" width="1" height="1" fill="#000"/><rect x="14" y="18" width="1" height="1" fill="#000"/><rect x="11" y="21" width="9" height="9" fill="#fff"/><rect x="10" y="20" width="11" height="1" fill="#000"/><rect x="10" y="30" width="11" height="1" fill="#000"/><rect x="10" y="21" width="1" height="9" fill="#000"/><rect x="20" y="21" width="1" height="9" fill="#000"/><rect x="13" y="25" width="5" height="1" fill="#000"/><rect x="15" y="23" width="1" height="5" fill="#000"/></svg><svg style="position:absolute;left:317px;top:196px;opacity:1" width="22" height="32" shape-rendering="crispEdges"><polygon points="0.5,0.5 10,10 6,10.5 9,17.5 7,18 4,12 0.5,14" fill="#fff"/><rect x="0" y="0" width="1" height="1" fill="#858585"/><rect x="0" y="1" width="1" height="1" fill="#858585"/><rect x="0" y="2" width="1" height="1" fill="#858585"/><rect x="0" y="3" width="1" height="1" fill="#858585"/><rect x="0" y="4" width="1" height="1" fill="#858585"/><rect x="0" y="5" width="1" height="1" fill="#858585"/><rect x="0" y="6" width="1" height="1" fill="#858585"/><rect x="0" y="7" width="1" height="1" fill="#858585"/><rect x="0" y="8" width="1" height="1" fill="#858585"/><rect x="0" y="9" width="1" height="1" fill="#858585"/><rect x="0" y="10" width="1" height="1" fill="#858585"/><rect x="0" y="11" width="1" height="1" fill="#858585"/><rect x="0" y="12" width="1" height="1" fill="#858585"/><rect x="0" y="13" width="1" height="1" fill="#858585"/><rect x="0" y="14" width="1" height="1" fill="#858585"/><rect x="1" y="1" width="1" height="1" fill="#858585"/><rect x="1" y="13" width="1" height="1" fill="#858585"/><rect x="2" y="2" width="1" height="1" fill="#858585"/><rect x="2" y="12" width="1" height="1" fill="#858585"/><rect x="2" y="16" width="1" height="1" fill="#858585"/><rect x="2" y="18" width="1" height="1" fill="#858585"/><rect x="2" y="20" width="1" height="1" fill="#858585"/><rect x="2" y="22" width="1" height="1" fill="#858585"/><rect x="2" y="24" width="1" height="1" fill="#858585"/><rect x="3" y="3" width="1" height="1" fill="#858585"/><rect x="3" y="11" width="1" height="1" fill="#858585"/><rect x="3" y="17" width="1" height="1" fill="#858585"/><rect x="3" y="19" width="1" height="1" fill="#858585"/><rect x="3" y="21" width="1" height="1" fill="#858585"/><rect x="3" y="23" width="1" height="1" fill="#858585"/><rect x="4" y="4" width="1" height="1" fill="#858585"/><rect x="4" y="12" width="1" height="1" fill="#858585"/><rect x="4" y="13" width="1" height="1" fill="#858585"/><rect x="4" y="16" width="1" height="1" fill="#858585"/><rect x="4" y="24" width="1" height="1" fill="#858585"/><rect x="5" y="5" width="1" height="1" fill="#858585"/><rect x="5" y="14" width="1" height="1" fill="#858585"/><rect x="5" y="15" width="1" height="1" fill="#858585"/><rect x="5" y="17" width="1" height="1" fill="#858585"/><rect x="5" y="23" width="1" height="1" fill="#858585"/><rect x="6" y="6" width="1" height="1" fill="#858585"/><rect x="6" y="10" width="1" height="1" fill="#858585"/><rect x="6" y="11" width="1" height="1" fill="#858585"/><rect x="6" y="16" width="1" height="1" fill="#858585"/><rect x="6" y="17" width="1" height="1" fill="#858585"/><rect x="6" y="24" width="1" height="1" fill="#858585"/><rect x="7" y="7" width="1" height="1" fill="#858585"/><rect x="7" y="10" width="1" height="1" fill="#858585"/><rect x="7" y="12" width="1" height="1" fill="#858585"/><rect x="7" y="13" width="1" height="1" fill="#858585"/><rect x="7" y="17" width="1" height="1" fill="#858585"/><rect x="7" y="18" width="1" height="1" fill="#858585"/><rect x="7" y="23" width="1" height="1" fill="#858585"/><rect x="8" y="8" width="1" height="1" fill="#858585"/><rect x="8" y="10" width="1" height="1" fill="#858585"/><rect x="8" y="14" width="1" height="1" fill="#858585"/><rect x="8" y="15" width="1" height="1" fill="#858585"/><rect x="8" y="16" width="1" height="1" fill="#858585"/><rect x="8" y="18" width="1" height="1" fill="#858585"/><rect x="8" y="24" width="1" height="1" fill="#858585"/><rect x="9" y="9" width="1" height="1" fill="#858585"/><rect x="9" y="10" width="1" height="1" fill="#858585"/><rect x="9" y="16" width="1" height="1" fill="#858585"/><rect x="9" y="17" width="1" height="1" fill="#858585"/><rect x="9" y="23" width="1" height="1" fill="#858585"/><rect x="10" y="10" width="1" height="1" fill="#858585"/><rect x="10" y="16" width="1" height="1" fill="#858585"/><rect x="11" y="17" width="1" height="1" fill="#858585"/><rect x="12" y="16" width="1" height="1" fill="#858585"/><rect x="13" y="17" width="1" height="1" fill="#858585"/><rect x="13" y="19" width="1" height="1" fill="#858585"/><rect x="14" y="16" width="1" height="1" fill="#858585"/><rect x="14" y="18" width="1" height="1" fill="#858585"/><rect x="11" y="21" width="9" height="9" fill="#fff"/><rect x="10" y="20" width="11" height="1" fill="#858585"/><rect x="10" y="30" width="11" height="1" fill="#858585"/><rect x="10" y="21" width="1" height="9" fill="#858585"/><rect x="20" y="21" width="1" height="9" fill="#858585"/><rect x="13" y="25" width="5" height="1" fill="#858585"/><rect x="15" y="23" width="1" height="5" fill="#858585"/></svg><svg style="position:absolute;left:439px;top:317px;opacity:1" width="22" height="32" shape-rendering="crispEdges"><polygon points="0.5,0.5 10,10 6,10.5 9,17.5 7,18 4,12 0.5,14" fill="#fff"/><rect x="0" y="0" width="1" height="1" fill="#bdbdbd"/><rect x="0" y="1" width="1" height="1" fill="#bdbdbd"/><rect x="0" y="2" width="1" height="1" fill="#bdbdbd"/><rect x="0" y="3" width="1" height="1" fill="#bdbdbd"/><rect x="0" y="4" width="1" height="1" fill="#bdbdbd"/><rect x="0" y="5" width="1" height="1" fill="#bdbdbd"/><rect x="0" y="6" width="1" height="1" fill="#bdbdbd"/><rect x="0" y="7" width="1" height="1" fill="#bdbdbd"/><rect x="0" y="8" width="1" height="1" fill="#bdbdbd"/><rect x="0" y="9" width="1" height="1" fill="#bdbdbd"/><rect x="0" y="10" width="1" height="1" fill="#bdbdbd"/><rect x="0" y="11" width="1" height="1" fill="#bdbdbd"/><rect x="0" y="12" width="1" height="1" fill="#bdbdbd"/><rect x="0" y="13" width="1" height="1" fill="#bdbdbd"/><rect x="0" y="14" width="1" height="1" fill="#bdbdbd"/><rect x="1" y="1" width="1" height="1" fill="#bdbdbd"/><rect x="1" y="13" width="1" height="1" fill="#bdbdbd"/><rect x="2" y="2" width="1" height="1" fill="#bdbdbd"/><rect x="2" y="12" width="1" height="1" fill="#bdbdbd"/><rect x="2" y="16" width="1" height="1" fill="#bdbdbd"/><rect x="2" y="18" width="1" height="1" fill="#bdbdbd"/><rect x="2" y="20" width="1" height="1" fill="#bdbdbd"/><rect x="2" y="22" width="1" height="1" fill="#bdbdbd"/><rect x="2" y="24" width="1" height="1" fill="#bdbdbd"/><rect x="3" y="3" width="1" height="1" fill="#bdbdbd"/><rect x="3" y="11" width="1" height="1" fill="#bdbdbd"/><rect x="3" y="17" width="1" height="1" fill="#bdbdbd"/><rect x="3" y="19" width="1" height="1" fill="#bdbdbd"/><rect x="3" y="21" width="1" height="1" fill="#bdbdbd"/><rect x="3" y="23" width="1" height="1" fill="#bdbdbd"/><rect x="4" y="4" width="1" height="1" fill="#bdbdbd"/><rect x="4" y="12" width="1" height="1" fill="#bdbdbd"/><rect x="4" y="13" width="1" height="1" fill="#bdbdbd"/><rect x="4" y="16" width="1" height="1" fill="#bdbdbd"/><rect x="4" y="24" width="1" height="1" fill="#bdbdbd"/><rect x="5" y="5" width="1" height="1" fill="#bdbdbd"/><rect x="5" y="14" width="1" height="1" fill="#bdbdbd"/><rect x="5" y="15" width="1" height="1" fill="#bdbdbd"/><rect x="5" y="17" width="1" height="1" fill="#bdbdbd"/><rect x="5" y="23" width="1" height="1" fill="#bdbdbd"/><rect x="6" y="6" width="1" height="1" fill="#bdbdbd"/><rect x="6" y="10" width="1" height="1" fill="#bdbdbd"/><rect x="6" y="11" width="1" height="1" fill="#bdbdbd"/><rect x="6" y="16" width="1" height="1" fill="#bdbdbd"/><rect x="6" y="17" width="1" height="1" fill="#bdbdbd"/><rect x="6" y="24" width="1" height="1" fill="#bdbdbd"/><rect x="7" y="7" width="1" height="1" fill="#bdbdbd"/><rect x="7" y="10" width="1" height="1" fill="#bdbdbd"/><rect x="7" y="12" width="1" height="1" fill="#bdbdbd"/><rect x="7" y="13" width="1" height="1" fill="#bdbdbd"/><rect x="7" y="17" width="1" height="1" fill="#bdbdbd"/><rect x="7" y="18" width="1" height="1" fill="#bdbdbd"/><rect x="7" y="23" width="1" height="1" fill="#bdbdbd"/><rect x="8" y="8" width="1" height="1" fill="#bdbdbd"/><rect x="8" y="10" width="1" height="1" fill="#bdbdbd"/><rect x="8" y="14" width="1" height="1" fill="#bdbdbd"/><rect x="8" y="15" width="1" height="1" fill="#bdbdbd"/><rect x="8" y="16" width="1" height="1" fill="#bdbdbd"/><rect x="8" y="18" width="1" height="1" fill="#bdbdbd"/><rect x="8" y="24" width="1" height="1" fill="#bdbdbd"/><rect x="9" y="9" width="1" height="1" fill="#bdbdbd"/><rect x="9" y="10" width="1" height="1" fill="#bdbdbd"/><rect x="9" y="16" width="1" height="1" fill="#bdbdbd"/><rect x="9" y="17" width="1" height="1" fill="#bdbdbd"/><rect x="9" y="23" width="1" height="1" fill="#bdbdbd"/><rect x="10" y="10" width="1" height="1" fill="#bdbdbd"/><rect x="10" y="16" width="1" height="1" fill="#bdbdbd"/><rect x="11" y="17" width="1" height="1" fill="#bdbdbd"/><rect x="12" y="16" width="1" height="1" fill="#bdbdbd"/><rect x="13" y="17" width="1" height="1" fill="#bdbdbd"/><rect x="13" y="19" width="1" height="1" fill="#bdbdbd"/><rect x="14" y="16" width="1" height="1" fill="#bdbdbd"/><rect x="14" y="18" width="1" height="1" fill="#bdbdbd"/><rect x="11" y="21" width="9" height="9" fill="#fff"/><rect x="10" y="20" width="11" height="1" fill="#bdbdbd"/><rect x="10" y="30" width="11" height="1" fill="#bdbdbd"/><rect x="10" y="21" width="1" height="9" fill="#bdbdbd"/><rect x="20" y="21" width="1" height="9" fill="#bdbdbd"/><rect x="13" y="25" width="5" height="1" fill="#bdbdbd"/><rect x="15" y="23" width="1" height="5" fill="#bdbdbd"/></svg>
<div style="position:absolute;left:520px;top:198px;width:1px;height:335px;background:rgba(0,0,0,0.2)"></div><div style="position:absolute;left:521px;top:197px;width:395px;height:1px;background:rgba(0,0,0,0.2)"></div><div style="position:absolute;left:521px;top:198px;width:1px;height:335px;background:#959598"></div><div style="position:absolute;left:521px;top:198px;width:396px;height:1px;background:#959595"></div><div style="position:absolute;left:522px;top:199px;width:398px;height:1px;background:#d6d6e2"></div><div style="position:absolute;left:522px;top:199px;width:1px;height:338px;background:#d6d6e2"></div><div style="position:absolute;left:523px;top:200px;width:397px;height:22px;background:#eeeef2"></div><div class="t" style="left:530px;top:202.69px;font-size:11px;line-height:17px;color:#000;transform:scaleX(0.93);transform-origin:0 0;">Field List</div><div style="position:absolute;left:523px;top:222px;width:380px;height:290px;background:#fff"></div><div style="position:absolute;left:903px;top:222px;width:17px;height:289px;background:#e8e8ec"></div><div style="position:absolute;left:903px;top:222px;width:17px;height:17px;background:#e2e2e6"></div><div style="position:absolute;left:903px;top:494px;width:17px;height:17px;background:#e1e1e6"></div><div style="position:absolute;left:907px;top:239px;width:9px;height:226px;background:#b9b9b9"></div><svg style="position:absolute;left:907px;top:227px" width="9" height="5"><polygon points="0,5 9,5 4.5,0" fill="#8e8e8e"/></svg><svg style="position:absolute;left:907px;top:501px" width="9" height="5"><polygon points="0,0 9,0 4.5,5" fill="#8a8a8a"/></svg><div style="position:absolute;left:523px;top:512px;width:397px;height:25px;background:#eeeef2"></div><div style="position:absolute;left:523px;top:512px;width:108px;height:1px;background:#c9c9da"></div><div style="position:absolute;left:707px;top:512px;width:213px;height:1px;background:#c9c9da"></div><div style="position:absolute;left:631px;top:512px;width:1px;height:23px;background:#c9c9da"></div><div style="position:absolute;left:706px;top:512px;width:1px;height:23px;background:#c9c9da"></div><div style="position:absolute;left:631px;top:534px;width:76px;height:1px;background:#c9c9da"></div><svg style="position:absolute;left:860px;top:204px" width="60" height="14" shape-rendering="crispEdges">
<rect x="7.5" y="3.5" width="8" height="6" fill="none" stroke="#6d6d6d" stroke-width="1"/>
<rect x="7" y="3" width="9" height="2" fill="#6d6d6d"/>
<rect x="28" y="3" width="5" height="1" fill="#6d6d6d"/>
<rect x="28" y="3" width="1" height="5" fill="#6d6d6d"/>
<rect x="31" y="3" width="2" height="5" fill="#6d6d6d"/>
<rect x="27" y="8" width="7" height="1" fill="#6d6d6d"/>
<rect x="30" y="9" width="1" height="2" fill="#6d6d6d"/>
</svg><svg style="position:absolute;left:904px;top:206px" width="11" height="10">
<path d="M1.3 1.5 L8.7 8 M8.7 1.5 L1.3 8" stroke="#6d6d6d" stroke-width="1.8"/>
</svg><svg style="position:absolute;left:530px;top:229px" width="7" height="7"><polygon points="0,6 6,6 6,0" fill="#6a6a6a"/></svg><svg style="position:absolute;left:542px;top:224px" width="16" height="14" shape-rendering="crispEdges"><rect x="0.5" y="0.5" width="15" height="13" fill="#fff" stroke="#4a4a4a"/></svg><svg style="position:absolute;left:546px;top:226px" width="8" height="10"><path d="M1 2 C1 0.5 7 0.5 7 2 V7.5 C7 9.2 1 9.2 1 7.5 Z" fill="#dcab65"/><ellipse cx="4" cy="2.2" rx="2.4" ry="1" fill="#f0dcb8"/></svg><div class="t" style="left:563px;top:222.69px;font-size:11px;line-height:17px;color:#000;transform:scaleX(0.975);transform-origin:0 0;">federationDataSource1</div><svg style="position:absolute;left:548px;top:247px" width="7" height="7"><polygon points="0,6 6,6 6,0" fill="#6a6a6a"/></svg><svg style="position:absolute;left:561px;top:243px" width="15" height="12" shape-rendering="crispEdges"><rect x="0" y="0" width="14" height="4" fill="#dcab65"/><rect x="0" y="5" width="4" height="3" fill="#aaaaaa"/><rect x="5" y="5" width="4" height="3" fill="#aaaaaa"/><rect x="10" y="5" width="4" height="3" fill="#aaaaaa"/><rect x="0" y="9" width="4" height="3" fill="#aaaaaa"/><rect x="5" y="9" width="4" height="3" fill="#aaaaaa"/><rect x="10" y="9" width="4" height="3" fill="#aaaaaa"/></svg><div class="t" style="left:581px;top:240.69px;font-size:11px;line-height:17px;color:#000;transform:scaleX(0.975);transform-origin:0 0;">jsonDataSource1</div><div style="position:absolute;left:577px;top:258px;width:326px;height:18px;background:#e1ecf9"></div><svg style="position:absolute;left:578px;top:260px" width="16" height="14" shape-rendering="crispEdges"><rect x="0" y="0" width="16" height="3" fill="#dcab65"/><rect x="0.5" y="2.5" width="15" height="11" fill="#fff" stroke="#555" stroke-width="1"/><rect x="1" y="0" width="14" height="3" fill="#dcab65"/></svg><svg style="position:absolute;left:578px;top:260px" width="16" height="14">
<path d="M5.6 5 V10.6" stroke="#1f5aa4" stroke-width="1.9"/>
<path d="M3.4 7 L5.4 5.3" stroke="#1f5aa4" stroke-width="1.4"/>
<path d="M3.2 10.4 H7.6" stroke="#1f5aa4" stroke-width="1.3"/>
<path d="M8.4 6.6 C8.6 4.9 12.2 4.8 12.2 6.7 C12.2 8.2 9.6 9 8.5 10.4 H12.6" fill="none" stroke="#1f5aa4" stroke-width="1.6"/>
</svg><div class="t" style="left:599px;top:258.69px;font-size:11px;line-height:17px;color:#000;transform:scaleX(0.975);transform-origin:0 0;">CategoryId</div><div style="position:absolute;left:577px;top:276px;width:326px;height:18px;background:#e1ecf9"></div><svg style="position:absolute;left:578px;top:278px" width="16" height="14" shape-rendering="crispEdges"><rect x="0" y="0" width="16" height="3" fill="#dcab65"/><rect x="0.5" y="2.5" width="15" height="11" fill="#fff" stroke="#555" stroke-width="1"/><rect x="1" y="0" width="14" height="3" fill="#dcab65"/></svg><svg style="position:absolute;left:578px;top:278px" width="16" height="14">
<ellipse cx="5.3" cy="8.4" rx="1.9" ry="2.0" fill="none" stroke="#1f5aa4" stroke-width="1.4"/>
<path d="M7.5 6.2 V10.9" stroke="#1f5aa4" stroke-width="1.4"/>
<path d="M9.5 4.1 V10.9 M8.2 4.6 H9.6" stroke="#1f5aa4" stroke-width="1.4"/>
<ellipse cx="11.1" cy="8.4" rx="1.7" ry="2.0" fill="none" stroke="#1f5aa4" stroke-width="1.4"/>
</svg><div class="t" style="left:599px;top:276.69px;font-size:11px;line-height:17px;color:#000;transform:scaleX(0.975);transform-origin:0 0;">CategoryName</div><div style="position:absolute;left:577px;top:294px;width:326px;height:18px;background:#e1ecf9"></div><svg style="position:absolute;left:578px;top:296px" width="16" height="14" shape-rendering="crispEdges"><rect x="0" y="0" width="16" height="3" fill="#dcab65"/><rect x="0.5" y="2.5" width="15" height="11" fill="#fff" stroke="#555" stroke-width="1"/><rect x="1" y="0" width="14" height="3" fill="#dcab65"/></svg><svg style="position:absolute;left:578px;top:296px" width="16" height="14">
<ellipse cx="5.3" cy="8.4" rx="1.9" ry="2.0" fill="none" stroke="#1f5aa4" stroke-width="1.4"/>
<path d="M7.5 6.2 V10.9" stroke="#1f5aa4" stroke-width="1.4"/>
<path d="M9.5 4.1 V10.9 M8.2 4.6 H9.6" stroke="#1f5aa4" stroke-width="1.4"/>
<ellipse cx="11.1" cy="8.4" rx="1.7" ry="2.0" fill="none" stroke="#1f5aa4" stroke-width="1.4"/>
</svg><div class="t" style="left:599px;top:294.69px;font-size:11px;line-height:17px;color:#000;transform:scaleX(0.975);transform-origin:0 0;">Description</div><svg style="position:absolute;left:578px;top:314px" width="16" height="14" shape-rendering="crispEdges"><rect x="0" y="0" width="16" height="3" fill="#dcab65"/><rect x="0.5" y="2.5" width="15" height="11" fill="#fff" stroke="#555" stroke-width="1"/><rect x="1" y="0" width="14" height="3" fill="#dcab65"/></svg><svg style="position:absolute;left:578px;top:314px" width="16" height="14">
<path d="M5.6 5 V10.6" stroke="#1f5aa4" stroke-width="1.9"/>
<path d="M3.4 7 L5.4 5.3" stroke="#1f5aa4" stroke-width="1.4"/>
<path d="M3.2 10.4 H7.6" stroke="#1f5aa4" stroke-width="1.3"/>
<path d="M8.4 6.6 C8.6 4.9 12.2 4.8 12.2 6.7 C12.2 8.2 9.6 9 8.5 10.4 H12.6" fill="none" stroke="#1f5aa4" stroke-width="1.6"/>
</svg><div class="t" style="left:599px;top:312.69px;font-size:11px;line-height:17px;color:#000;transform:scaleX(0.975);transform-origin:0 0;">Products_CategoryId</div><svg style="position:absolute;left:578px;top:332px" width="16" height="14" shape-rendering="crispEdges"><rect x="0" y="0" width="16" height="3" fill="#dcab65"/><rect x="0.5" y="2.5" width="15" height="11" fill="#fff" stroke="#555" stroke-width="1"/><rect x="1" y="0" width="14" height="3" fill="#dcab65"/></svg><svg style="position:absolute;left:578px;top:332px" width="16" height="14"><path d="M4.2 7.9 L6.6 10.1 L11.3 5.7" fill="none" stroke="#2e902e" stroke-width="1.5"/></svg><div class="t" style="left:599px;top:330.69px;font-size:11px;line-height:17px;color:#000;transform:scaleX(0.975);transform-origin:0 0;">Products_Discontinued</div><div style="position:absolute;left:577px;top:348px;width:326px;height:18px;background:#e1ecf9"></div><svg style="position:absolute;left:578px;top:350px" width="16" height="14" shape-rendering="crispEdges"><rect x="0" y="0" width="16" height="3" fill="#dcab65"/><rect x="0.5" y="2.5" width="15" height="11" fill="#fff" stroke="#555" stroke-width="1"/><rect x="1" y="0" width="14" height="3" fill="#dcab65"/></svg><svg style="position:absolute;left:578px;top:350px" width="16" height="14">
<path d="M5.6 5 V10.6" stroke="#1f5aa4" stroke-width="1.9"/>
<path d="M3.4 7 L5.4 5.3" stroke="#1f5aa4" stroke-width="1.4"/>
<path d="M3.2 10.4 H7.6" stroke="#1f5aa4" stroke-width="1.3"/>
<path d="M8.4 6.6 C8.6 4.9 12.2 4.8 12.2 6.7 C12.2 8.2 9.6 9 8.5 10.4 H12.6" fill="none" stroke="#1f5aa4" stroke-width="1.6"/>
</svg><div class="t" style="left:599px;top:348.69px;font-size:11px;line-height:17px;color:#000;transform:scaleX(0.975);transform-origin:0 0;">Products_ProductId</div><div style="position:absolute;left:577px;top:366px;width:326px;height:18px;background:#e1ecf9"></div><svg style="position:absolute;left:578px;top:368px" width="16" height="14" shape-rendering="crispEdges"><rect x="0" y="0" width="16" height="3" fill="#dcab65"/><rect x="0.5" y="2.5" width="15" height="11" fill="#fff" stroke="#555" stroke-width="1"/><rect x="1" y="0" width="14" height="3" fill="#dcab65"/></svg><svg style="position:absolute;left:578px;top:368px" width="16" height="14">
<ellipse cx="5.3" cy="8.4" rx="1.9" ry="2.0" fill="none" stroke="#1f5aa4" stroke-width="1.4"/>
<path d="M7.5 6.2 V10.9" stroke="#1f5aa4" stroke-width="1.4"/>
<path d="M9.5 4.1 V10.9 M8.2 4.6 H9.6" stroke="#1f5aa4" stroke-width="1.4"/>
<ellipse cx="11.1" cy="8.4" rx="1.7" ry="2.0" fill="none" stroke="#1f5aa4" stroke-width="1.4"/>
</svg><div class="t" style="left:599px;top:366.69px;font-size:11px;line-height:17px;color:#000;transform:scaleX(0.975);transform-origin:0 0;">Products_ProductName</div><svg style="position:absolute;left:578px;top:386px" width="16" height="14" shape-rendering="crispEdges"><rect x="0" y="0" width="16" height="3" fill="#dcab65"/><rect x="0.5" y="2.5" width="15" height="11" fill="#fff" stroke="#555" stroke-width="1"/><rect x="1" y="0" width="14" height="3" fill="#dcab65"/></svg><svg style="position:absolute;left:578px;top:386px" width="16" height="14">
<ellipse cx="5.3" cy="8.4" rx="1.9" ry="2.0" fill="none" stroke="#1f5aa4" stroke-width="1.4"/>
<path d="M7.5 6.2 V10.9" stroke="#1f5aa4" stroke-width="1.4"/>
<path d="M9.5 4.1 V10.9 M8.2 4.6 H9.6" stroke="#1f5aa4" stroke-width="1.4"/>
<ellipse cx="11.1" cy="8.4" rx="1.7" ry="2.0" fill="none" stroke="#1f5aa4" stroke-width="1.4"/>
</svg><div class="t" style="left:599px;top:384.69px;font-size:11px;line-height:17px;color:#000;transform:scaleX(0.975);transform-origin:0 0;">Products_QuantityPerUnit</div><svg style="position:absolute;left:578px;top:404px" width="16" height="14" shape-rendering="crispEdges"><rect x="0" y="0" width="16" height="3" fill="#dcab65"/><rect x="0.5" y="2.5" width="15" height="11" fill="#fff" stroke="#555" stroke-width="1"/><rect x="1" y="0" width="14" height="3" fill="#dcab65"/></svg><svg style="position:absolute;left:578px;top:404px" width="16" height="14">
<path d="M5.6 5 V10.6" stroke="#1f5aa4" stroke-width="1.9"/>
<path d="M3.4 7 L5.4 5.3" stroke="#1f5aa4" stroke-width="1.4"/>
<path d="M3.2 10.4 H7.6" stroke="#1f5aa4" stroke-width="1.3"/>
<path d="M8.4 6.6 C8.6 4.9 12.2 4.8 12.2 6.7 C12.2 8.2 9.6 9 8.5 10.4 H12.6" fill="none" stroke="#1f5aa4" stroke-width="1.6"/>
</svg><div class="t" style="left:599px;top:402.69px;font-size:11px;line-height:17px;color:#000;transform:scaleX(0.975);transform-origin:0 0;">Products_ReorderLevel</div><svg style="position:absolute;left:579px;top:423px" width="15" height="12" shape-rendering="crispEdges"><rect x="0" y="0" width="14" height="4" fill="#dcab65"/><rect x="0" y="5" width="4" height="3" fill="#aaaaaa"/><rect x="5" y="5" width="4" height="3" fill="#1b5aa6"/><rect x="10" y="5" width="4" height="3" fill="#aaaaaa"/><rect x="0" y="9" width="4" height="3" fill="#aaaaaa"/><rect x="5" y="9" width="4" height="3" fill="#1b5aa6"/><rect x="10" y="9" width="4" height="3" fill="#aaaaaa"/></svg><div class="t" style="left:599px;top:420.69px;font-size:11px;line-height:17px;color:#000;transform:scaleX(0.975);transform-origin:0 0;">Products_Supplier</div><svg style="position:absolute;left:578px;top:440px" width="16" height="14" shape-rendering="crispEdges"><rect x="0" y="0" width="16" height="3" fill="#dcab65"/><rect x="0.5" y="2.5" width="15" height="11" fill="#fff" stroke="#555" stroke-width="1"/><rect x="1" y="0" width="14" height="3" fill="#dcab65"/></svg><svg style="position:absolute;left:578px;top:440px" width="16" height="14">
<path d="M5.6 5 V10.6" stroke="#1f5aa4" stroke-width="1.9"/>
<path d="M3.4 7 L5.4 5.3" stroke="#1f5aa4" stroke-width="1.4"/>
<path d="M3.2 10.4 H7.6" stroke="#1f5aa4" stroke-width="1.3"/>
<path d="M8.4 6.6 C8.6 4.9 12.2 4.8 12.2 6.7 C12.2 8.2 9.6 9 8.5 10.4 H12.6" fill="none" stroke="#1f5aa4" stroke-width="1.6"/>
</svg><div class="t" style="left:599px;top:438.69px;font-size:11px;line-height:17px;color:#000;transform:scaleX(0.975);transform-origin:0 0;">Products_SupplierId</div><div style="position:absolute;left:577px;top:456px;width:326px;height:18px;background:#e1ecf9"></div><svg style="position:absolute;left:578px;top:458px" width="16" height="14" shape-rendering="crispEdges"><rect x="0" y="0" width="16" height="3" fill="#dcab65"/><rect x="0.5" y="2.5" width="15" height="11" fill="#fff" stroke="#555" stroke-width="1"/><rect x="1" y="0" width="14" height="3" fill="#dcab65"/></svg><svg style="position:absolute;left:578px;top:458px" width="16" height="14">
<path d="M4.2 5 V10.6" stroke="#1f5aa4" stroke-width="1.8"/>
<path d="M2.4 6.8 L4.1 5.3" stroke="#1f5aa4" stroke-width="1.3"/>
<path d="M2.2 10.4 H5.4" stroke="#1f5aa4" stroke-width="1.2"/>
<path d="M7.2 9.4 L6.5 12.3" stroke="#1f5aa4" stroke-width="1.5"/>
<path d="M8.6 6.6 C8.8 4.9 12.4 4.8 12.4 6.7 C12.4 8.2 9.8 9 8.7 10.4 H12.8" fill="none" stroke="#1f5aa4" stroke-width="1.6"/>
</svg><div class="t" style="left:599px;top:456.69px;font-size:11px;line-height:17px;color:#000;transform:scaleX(0.975);transform-origin:0 0;">Products_UnitPrice</div><svg style="position:absolute;left:578px;top:476px" width="16" height="14" shape-rendering="crispEdges"><rect x="0" y="0" width="16" height="3" fill="#dcab65"/><rect x="0.5" y="2.5" width="15" height="11" fill="#fff" stroke="#555" stroke-width="1"/><rect x="1" y="0" width="14" height="3" fill="#dcab65"/></svg><svg style="position:absolute;left:578px;top:476px" width="16" height="14">
<path d="M5.6 5 V10.6" stroke="#1f5aa4" stroke-width="1.9"/>
<path d="M3.4 7 L5.4 5.3" stroke="#1f5aa4" stroke-width="1.4"/>
<path d="M3.2 10.4 H7.6" stroke="#1f5aa4" stroke-width="1.3"/>
<path d="M8.4 6.6 C8.6 4.9 12.2 4.8 12.2 6.7 C12.2 8.2 9.6 9 8.5 10.4 H12.6" fill="none" stroke="#1f5aa4" stroke-width="1.6"/>
</svg><div class="t" style="left:599px;top:474.69px;font-size:11px;line-height:17px;color:#000;transform:scaleX(0.975);transform-origin:0 0;">Products_UnitsInStock</div><svg style="position:absolute;left:578px;top:494px" width="16" height="14" shape-rendering="crispEdges"><rect x="0" y="0" width="16" height="3" fill="#dcab65"/><rect x="0.5" y="2.5" width="15" height="11" fill="#fff" stroke="#555" stroke-width="1"/><rect x="1" y="0" width="14" height="3" fill="#dcab65"/></svg><svg style="position:absolute;left:578px;top:494px" width="16" height="14">
<path d="M5.6 5 V10.6" stroke="#1f5aa4" stroke-width="1.9"/>
<path d="M3.4 7 L5.4 5.3" stroke="#1f5aa4" stroke-width="1.4"/>
<path d="M3.2 10.4 H7.6" stroke="#1f5aa4" stroke-width="1.3"/>
<path d="M8.4 6.6 C8.6 4.9 12.2 4.8 12.2 6.7 C12.2 8.2 9.6 9 8.5 10.4 H12.6" fill="none" stroke="#1f5aa4" stroke-width="1.6"/>
</svg><div class="t" style="left:599px;top:492.69px;font-size:11px;line-height:17px;color:#000;transform:scaleX(0.975);transform-origin:0 0;">Products_UnitsOnOrder</div><svg style="position:absolute;left:530px;top:516px" width="16" height="16" shape-rendering="crispEdges">
<rect x="5" y="1" width="5" height="4" fill="#dcab65"/>
<rect x="1" y="10" width="5" height="4" fill="#dcab65"/>
<rect x="9" y="10" width="5" height="4" fill="#dcab65"/>
<rect x="6.5" y="5" width="1" height="3" fill="#444"/>
<path d="M3.5 10 V7.5 H11.5 V10" fill="none" stroke="#444" stroke-width="1"/>
</svg><div class="t" style="left:550px;top:515.69px;font-size:11px;line-height:17px;color:#000;transform:scaleX(0.975);transform-origin:0 0;">Report Explorer</div><svg style="position:absolute;left:638px;top:516px" width="17" height="17">
<rect x="1" y="1" width="10" height="5.3" rx="5" ry="2.6" fill="#dcab65"/>
<path d="M1 6.9 Q3 8.5 6.5 8.7 V10.9 Q3 10.7 1 9.3 Z" fill="#dcab65"/>
<path d="M1 9.9 Q3 11.5 6.5 11.7 V14.2 Q3 14 1 12.4 Z" fill="#dcab65"/>
<rect x="7.5" y="8.5" width="7" height="2" rx="0.5" fill="#fff" stroke="#4a4a4a" stroke-width="1"/>
<rect x="7.5" y="12.5" width="7" height="2" rx="0.5" fill="#fff" stroke="#4a4a4a" stroke-width="1"/>
</svg><div class="t" style="left:657px;top:515.69px;font-size:11px;line-height:17px;color:#3d8ee8;transform:scaleX(0.93);transform-origin:0 0;">Field List</div>
<svg style="position:absolute;left:605px;top:373px;opacity:0.14" width="22" height="32" shape-rendering="crispEdges"><polygon points="0.5,0.5 10,10 6,10.5 9,17.5 7,18 4,12 0.5,14" fill="none"/><rect x="0" y="0" width="1" height="1" fill="#000"/><rect x="0" y="1" width="1" height="1" fill="#000"/><rect x="0" y="2" width="1" height="1" fill="#000"/><rect x="0" y="3" width="1" height="1" fill="#000"/><rect x="0" y="4" width="1" height="1" fill="#000"/><rect x="0" y="5" width="1" height="1" fill="#000"/><rect x="0" y="6" width="1" height="1" fill="#000"/><rect x="0" y="7" width="1" height="1" fill="#000"/><rect x="0" y="8" width="1" height="1" fill="#000"/><rect x="0" y="9" width="1" height="1" fill="#000"/><rect x="0" y="10" width="1" height="1" fill="#000"/><rect x="0" y="11" width="1" height="1" fill="#000"/><rect x="0" y="12" width="1" height="1" fill="#000"/><rect x="0" y="13" width="1" height="1" fill="#000"/><rect x="0" y="14" width="1" height="1" fill="#000"/><rect x="1" y="1" width="1" height="1" fill="#000"/><rect x="1" y="13" width="1" height="1" fill="#000"/><rect x="2" y="2" width="1" height="1" fill="#000"/><rect x="2" y="12" width="1" height="1" fill="#000"/><rect x="2" y="16" width="1" height="1" fill="#000"/><rect x="2" y="18" width="1" height="1" fill="#000"/><rect x="2" y="20" width="1" height="1" fill="#000"/><rect x="2" y="22" width="1" height="1" fill="#000"/><rect x="2" y="24" width="1" height="1" fill="#000"/><rect x="3" y="3" width="1" height="1" fill="#000"/><rect x="3" y="11" width="1" height="1" fill="#000"/><rect x="3" y="17" width="1" height="1" fill="#000"/><rect x="3" y="19" width="1" height="1" fill="#000"/><rect x="3" y="21" width="1" height="1" fill="#000"/><rect x="3" y="23" width="1" height="1" fill="#000"/><rect x="4" y="4" width="1" height="1" fill="#000"/><rect x="4" y="12" width="1" height="1" fill="#000"/><rect x="4" y="13" width="1" height="1" fill="#000"/><rect x="4" y="16" width="1" height="1" fill="#000"/><rect x="4" y="24" width="1" height="1" fill="#000"/><rect x="5" y="5" width="1" height="1" fill="#000"/><rect x="5" y="14" width="1" height="1" fill="#000"/><rect x="5" y="15" width="1" height="1" fill="#000"/><rect x="5" y="17" width="1" height="1" fill="#000"/><rect x="5" y="23" width="1" height="1" fill="#000"/><rect x="6" y="6" width="1" height="1" fill="#000"/><rect x="6" y="10" width="1" height="1" fill="#000"/><rect x="6" y="11" width="1" height="1" fill="#000"/><rect x="6" y="16" width="1" height="1" fill="#000"/><rect x="6" y="17" width="1" height="1" fill="#000"/><rect x="6" y="24" width="1" height="1" fill="#000"/><rect x="7" y="7" width="1" height="1" fill="#000"/><rect x="7" y="10" width="1" height="1" fill="#000"/><rect x="7" y="12" width="1" height="1" fill="#000"/><rect x="7" y="13" width="1" height="1" fill="#000"/><rect x="7" y="17" width="1" height="1" fill="#000"/><rect x="7" y="18" width="1" height="1" fill="#000"/><rect x="7" y="23" width="1" height="1" fill="#000"/><rect x="8" y="8" width="1" height="1" fill="#000"/><rect x="8" y="10" width="1" height="1" fill="#000"/><rect x="8" y="14" width="1" height="1" fill="#000"/><rect x="8" y="15" width="1" height="1" fill="#000"/><rect x="8" y="16" width="1" height="1" fill="#000"/><rect x="8" y="18" width="1" height="1" fill="#000"/><rect x="8" y="24" width="1" height="1" fill="#000"/><rect x="9" y="9" width="1" height="1" fill="#000"/><rect x="9" y="10" width="1" height="1" fill="#000"/><rect x="9" y="16" width="1" height="1" fill="#000"/><rect x="9" y="17" width="1" height="1" fill="#000"/><rect x="9" y="23" width="1" height="1" fill="#000"/><rect x="10" y="10" width="1" height="1" fill="#000"/><rect x="10" y="16" width="1" height="1" fill="#000"/><rect x="11" y="17" width="1" height="1" fill="#000"/><rect x="12" y="16" width="1" height="1" fill="#000"/><rect x="13" y="17" width="1" height="1" fill="#000"/><rect x="13" y="19" width="1" height="1" fill="#000"/><rect x="14" y="16" width="1" height="1" fill="#000"/><rect x="14" y="18" width="1" height="1" fill="#000"/><rect x="11" y="21" width="9" height="9" fill="none"/><rect x="10" y="20" width="11" height="1" fill="#000"/><rect x="10" y="30" width="11" height="1" fill="#000"/><rect x="10" y="21" width="1" height="9" fill="#000"/><rect x="20" y="21" width="1" height="9" fill="#000"/><rect x="13" y="25" width="5" height="1" fill="#000"/><rect x="15" y="23" width="1" height="5" fill="#000"/></svg>
</body></html>
